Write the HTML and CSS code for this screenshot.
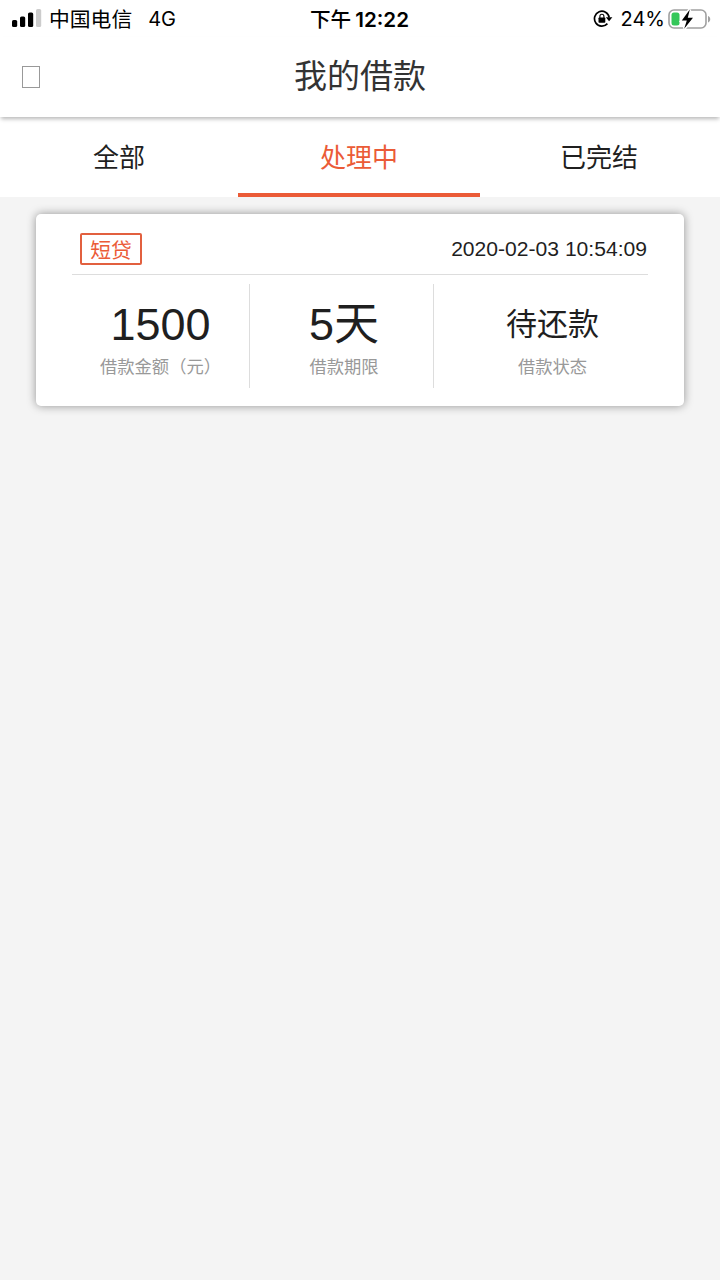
FILE: index.html
```html
<!DOCTYPE html>
<html lang="zh-CN">
<head>
  <meta charset="UTF-8">
  <title>我的借款</title>
  <link rel="stylesheet" href="styles.css">
</head>
<body>
  <!-- 状态栏 -->
  <div class="status-bar">
    <div class="status-left">
      <svg class="signal" width="30" height="20" viewBox="0 0 30 20">
        <rect x="0" y="11" width="5.2" height="7" rx="1.6"/>
        <rect x="8" y="7.5" width="5.2" height="10.5" rx="1.6"/>
        <rect x="16" y="3.5" width="5.2" height="14.5" rx="1.6"/>
        <rect x="24" y="0" width="5.2" height="18" rx="1.6" fill="#ccc"/>
      </svg>
      <span class="carrier">中国电信</span>
      <span class="network">4G</span>
    </div>
    <div class="status-time"><span>下午</span><b>12:22</b></div>
    <div class="status-right">
      <svg class="lock" width="20" height="18" viewBox="0 0 20 18">
        <path d="M14.4 13.600A7.400 7.400 0 1 1 16.200 7.500" fill="none" stroke="#000" stroke-width="1.7"/>
        <path d="M12.800 7.200h6.600L16.100 11.300z"/>
        <rect x="5.500" y="7.600" width="6.800" height="5.200" rx=".7"/>
        <path d="M6.900 8V6.300a2 2 0 0 1 4 0V8" fill="none" stroke="#000" stroke-width="1.1"/>
      </svg>
      <span class="percent">24%</span>
      <svg class="battery" width="43" height="21" viewBox="0 0 43 21">
        <rect x="1" y="1" width="37" height="18" rx="5" fill="none" stroke="#a0a0a0" stroke-width="1.6"/>
        <path d="M40 7v6.4c3-1 3-5.400 0-6.400z" fill="#a0a0a0"/>
        <rect x="3.500" y="3.500" width="8" height="13" rx="2.500" fill="#34c759"/>
        <path d="M21.800 .5 13.800 11.500h5L16.200 19.800 25 8.700h-5.200z" stroke="#fff" stroke-width="3"/>
        <path d="M21.800 .5 13.800 11.500h5L16.200 19.800 25 8.700h-5.200z"/>
      </svg>
    </div>
  </div>

  <!-- 导航栏 -->
  <header class="nav">
    <span class="back"></span>
    <h1>我的借款</h1>
  </header>

  <nav class="tabs">
    <a class="tab">全部</a>
    <a class="tab active">处理中</a>
    <a class="tab">已完结</a>
  </nav>

  <!-- 借款记录 -->
  <div class="card">
    <div class="card-head">
      <span class="tag">短贷</span>
      <span class="date">2020-02-03 10:54:09</span>
    </div>
    <div class="card-body">
      <div class="item">
        <div class="value">1500</div>
        <div class="label">借款金额（元）</div>
      </div>
      <div class="item term">
        <div class="value">5天</div>
        <div class="label">借款期限</div>
      </div>
      <div class="item">
        <div class="value state">待还款</div>
        <div class="label">借款状态</div>
      </div>
    </div>
  </div>
</body>
</html>
```
FILE: styles.css
```css
* {
  box-sizing: border-box;
}

body {
  margin: 0;
  min-height: 100vh;
  background-color: #f4f4f4;
  color: #1f1f1f;
  font-family: "Liberation Sans", "Noto Sans CJK SC", sans-serif;
}

.status-bar {
  display: grid;
  grid-template-columns: 1fr auto 1fr;
  align-items: center;
  height: 37px;
  padding: 0 9px 0 12px;
  background-color: #fff;
  color: #000;
  font-family: Inter, "Noto Sans CJK SC", sans-serif;
  font-size: 20px;
  line-height: 37px;
}

.status-left,
.status-right,
.status-time {
  display: flex;
  align-items: center;
  white-space: nowrap;
}

.status-bar span,
.status-bar b {
  padding-top: 1px;
}

.carrier {
  margin-left: 7px;
  font-size: 20.8px;
}

.network {
  margin-left: 16px;
}

.status-time {
  margin-right: 4px;
}

.status-time span {
  font-size: 20.6px;
  font-weight: 500;
}

.status-time b {
  margin-left: 4px;
  font-size: 20.6px;
  font-weight: 600;
}

.status-right {
  justify-content: flex-end;
}

.percent {
  margin: 0 3px 0 8px;
}

.nav {
  display: grid;
  grid-template-columns: 60px 1fr 60px;
  align-items: center;
  position: relative;
  height: 80px;
  background-color: #fff;
  box-shadow: 0 3px 4px -1px rgba(0, 0, 0, 0.28);
}

.back {
  width: 18px;
  height: 22px;
  margin-left: 22px;
  border: 1px solid #999;
}

.nav h1 {
  margin: 0;
  color: #333;
  font-size: 33px;
  font-weight: normal;
  line-height: 78px;
  text-align: center;
}

.tabs {
  display: grid;
  grid-template-columns: 238px 242px 238px;
  height: 80px;
  background-color: #fff;
}

.tab {
  font-size: 26px;
  line-height: 82px;
  text-align: center;
}

.active {
  height: 80px;
  border-bottom: 4px solid #eb5b37;
  color: #eb5b37;
}

.card {
  height: 192px;
  margin: 17px 36px 0;
  padding: 0 36px;
  border-radius: 5px;
  background-color: #fff;
  box-shadow: 0 0 10px rgba(0, 0, 0, 0.4);
}

.card-head {
  display: flex;
  justify-content: space-between;
  align-items: center;
  height: 61px;
  padding: 10px 0 0 8px;
  border-bottom: 1px solid #ddd;
}

.tag {
  width: 62px;
  height: 32px;
  border: 2px solid #e2603f;
  border-radius: 2px;
  color: #eb5b37;
  font-size: 20.8px;
  line-height: 31px;
  text-align: center;
}

.date {
  margin-right: 1px;
  font-size: 21.1px;
}

.card-body {
  display: grid;
  grid-template-columns: 178px 184px 237px;
  height: 104px;
  margin: 9px -23px 0 0;
}

.item {
  border-right: 1px solid #ddd;
  text-align: center;
}

.item:last-child {
  border-right: none;
}

.term {
  padding-left: 5px;
}

.value {
  height: 72px;
  font-size: 45px;
  line-height: 82px;
}

.state {
  font-size: 31px;
  line-height: 82px;
}

.label {
  color: #999;
  font-size: 17.3px;
  line-height: 22px;
}
```
